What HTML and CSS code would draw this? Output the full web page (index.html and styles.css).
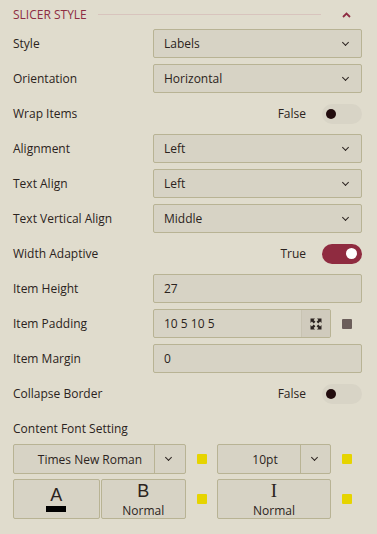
FILE: index.html
```html
<!DOCTYPE html>
<html lang="en-us">

<head>
    <meta charset="utf-8">
    <meta name="viewport" content="width=device-width, initial-scale=1.0">
    <title>Slicer Style</title>
    <link rel="stylesheet" href="styles.css">
</head>

<body>
    <section class="panel">
        <header class="panel-header">
            <span class="panel-title">Slicer Style</span>
            <span class="panel-line"></span>
            <svg class="panel-caret" width="9" height="6" viewBox="0 0 9 6">
                <path d="M1 5 L4.5 1.5 L8 5" fill="none" stroke="#8e2c42" stroke-width="1.8" />
            </svg>
        </header>

        <div class="row">
            <label class="row-label">Style</label>
            <div class="select"><span>Labels</span><i class="caret"></i></div>
        </div>
        <div class="row">
            <label class="row-label">Orientation</label>
            <div class="select"><span>Horizontal</span><i class="caret"></i></div>
        </div>
        <div class="row">
            <label class="row-label">Wrap Items</label>
            <div class="switch-wrap">
                <span class="switch-text">False</span>
                <span class="switch"><span class="knob"></span></span>
            </div>
        </div>
        <div class="row">
            <label class="row-label">Alignment</label>
            <div class="select"><span>Left</span><i class="caret"></i></div>
        </div>
        <div class="row">
            <label class="row-label">Text Align</label>
            <div class="select"><span>Left</span><i class="caret"></i></div>
        </div>
        <div class="row">
            <label class="row-label">Text Vertical Align</label>
            <div class="select"><span>Middle</span><i class="caret"></i></div>
        </div>
        <div class="row">
            <label class="row-label">Width Adaptive</label>
            <div class="switch-wrap">
                <span class="switch-text">True</span>
                <span class="switch on"><span class="knob"></span></span>
            </div>
        </div>
        <div class="row">
            <label class="row-label">Item Height</label>
            <div class="input">27</div>
        </div>
        <div class="row">
            <label class="row-label">Item Padding</label>
            <div class="input-group">
                <div class="input input-short">
                    <span class="input-value">10 5 10 5</span>
                    <span class="input-addon">
                        <svg width="12" height="12" viewBox="0 0 12 12">
                            <path d="M0.5 0.5 H5 L3.6 1.9 L5.4 3.7 L3.7 5.4 L1.9 3.6 L0.5 5 Z" fill="#2b2320" />
                            <path d="M11.5 0.5 H7 L8.4 1.9 L6.6 3.7 L8.3 5.4 L10.1 3.6 L11.5 5 Z" fill="#2b2320" />
                            <path d="M0.5 11.5 H5 L3.6 10.1 L5.4 8.3 L3.7 6.6 L1.9 8.4 L0.5 7 Z" fill="#2b2320" />
                            <path d="M11.5 11.5 H7 L8.4 10.1 L6.6 8.3 L8.3 6.6 L10.1 8.4 L11.5 7 Z" fill="#2b2320" />
                        </svg>
                    </span>
                </div>
                <span class="dot dot-grey"></span>
            </div>
        </div>
        <div class="row">
            <label class="row-label">Item Margin</label>
            <div class="input">0</div>
        </div>
        <div class="row">
            <label class="row-label">Collapse Border</label>
            <div class="switch-wrap">
                <span class="switch-text">False</span>
                <span class="switch"><span class="knob"></span></span>
            </div>
        </div>

        <div class="font-title">Content Font Setting</div>

        <div class="font-row">
            <div class="font-cell">
                <div class="combo combo-family">
                    <span class="combo-value">Times New Roman</span>
                    <span class="combo-btn"><i class="caret"></i></span>
                </div>
                <span class="dot"></span>
            </div>
            <div class="font-cell">
                <div class="combo combo-size">
                    <span class="combo-value">10pt</span>
                    <span class="combo-btn"><i class="caret"></i></span>
                </div>
                <span class="dot"></span>
            </div>
        </div>

        <div class="font-row">
            <div class="font-cell">
                <div class="btn-pair">
                    <div class="fbtn">
                        <span class="fbtn-glyph glyph-a">A</span>
                        <span class="color-bar"></span>
                    </div>
                    <div class="fbtn">
                        <span class="fbtn-glyph">B</span>
                        <span class="fbtn-text">Normal</span>
                    </div>
                </div>
                <span class="dot"></span>
            </div>
            <div class="font-cell">
                <div class="fbtn fbtn-wide">
                    <span class="fbtn-glyph glyph-serif">I</span>
                    <span class="fbtn-text">Normal</span>
                </div>
                <span class="dot"></span>
            </div>
        </div>
    </section>
</body>

</html>
```

FILE: styles.css
```css
* {
    margin: 0;
    padding: 0;
    box-sizing: border-box;
}

body {
    background-color: #e0dccd;
    font-family: "Open Sans", "Noto Sans", sans-serif;
    font-size: 12px;
    color: #2b2320;
}

.panel {
    padding: 0 15px 0 13px;
}

.panel-header {
    display: flex;
    align-items: center;
    height: 29px;
}

.panel-title {
    text-transform: uppercase;
    color: #8e2c42;
    font-size: 12px;
    padding-right: 11px;
}

.panel-line {
    flex: 1;
    height: 1px;
    background-color: #d8c4bd;
    margin-right: 21px;
}

.panel-caret {
    margin-right: 11px;
}

.row {
    display: flex;
    align-items: center;
    height: 29px;
    margin-bottom: 6px;
}

.row-label {
    width: 140px;
    flex: none;
}

.select,
.input {
    flex: 1;
    height: 29px;
    display: flex;
    align-items: center;
    justify-content: space-between;
    background-color: #d7d3c5;
    border: 1px solid #b8b394;
    border-radius: 2px;
    padding: 0 10px 0 10px;
}

.caret {
    display: block;
    width: 5px;
    height: 5px;
    border-right: 1.6px solid #2b2320;
    border-bottom: 1.6px solid #2b2320;
    transform: rotate(45deg);
    margin: -3px 3px 0 0;
}

.switch-wrap {
    flex: 1;
    display: flex;
    justify-content: flex-end;
    align-items: center;
}

.switch-text {
    margin-right: 16px;
}

.switch {
    width: 40px;
    height: 20px;
    border-radius: 10px;
    background-color: #d8d4c6;
    display: flex;
    align-items: center;
    padding: 0 5px 0 4px;
}

.knob {
    width: 10px;
    height: 10px;
    border-radius: 50%;
    background-color: #220c0e;
}

.switch.on {
    background-color: #8f2b40;
    justify-content: flex-end;
}

.switch.on .knob {
    width: 11px;
    height: 11px;
    background-color: #fff;
}

.input-group {
    flex: 1;
    display: flex;
    align-items: center;
}

.input-short {
    padding-right: 0;
    overflow: hidden;
}

.input-addon {
    width: 29px;
    height: 27px;
    display: flex;
    align-items: center;
    justify-content: center;
    background-color: #d0cbbd;
    border-left: 1px solid #c8c3b2;
}

.dot {
    flex: none;
    width: 10px;
    height: 10px;
    border-radius: 1px;
    background-color: #e6d400;
    margin: 0 10px 0 11px;
}

.dot-grey {
    background-color: #6b5e5a;
}

.font-title {
    height: 24px;
    line-height: 30px;
    margin-bottom: 6px;
}

.font-row {
    display: flex;
    margin-bottom: 5px;
}

.font-cell {
    display: flex;
    align-items: center;
}

.combo {
    height: 30px;
    display: flex;
    background-color: #d7d3c5;
    border: 1px solid #b8b394;
    border-radius: 2px;
}

.combo-value {
    flex: 1;
    display: flex;
    align-items: center;
    justify-content: center;
    padding-left: 12px;
}

.combo-btn {
    width: 31px;
    display: flex;
    align-items: center;
    justify-content: center;
    border-left: 1px solid #b8b394;
}

.combo-family {
    width: 173px;
}

.combo-size {
    width: 114px;
}

.combo-size .combo-btn {
    width: 30px;
}

.btn-pair {
    display: flex;
    width: 173px;
}

.fbtn {
    width: 87px;
    height: 40px;
    display: flex;
    flex-direction: column;
    align-items: center;
    justify-content: flex-start;
    background-color: #d7d3c5;
    border: 1px solid #b8b394;
    border-radius: 2px;
    padding-top: 1px;
}

.fbtn + .fbtn {
    width: 86px;
    margin-left: 1px;
}

.fbtn-wide {
    width: 114px;
}

.fbtn-glyph {
    font-family: "Liberation Sans", Arial, sans-serif;
    font-size: 18px;
    line-height: normal;
}

.glyph-a {
    padding-top: 4px;
}

.glyph-serif {
    font-family: "Liberation Serif", serif;
    font-size: 19px;
    line-height: normal;
    margin-top: -1px;
}

.fbtn-text {
    font-size: 12px;
    line-height: normal;
}

.color-bar {
    width: 20px;
    height: 6px;
    background-color: #000;
}
```
